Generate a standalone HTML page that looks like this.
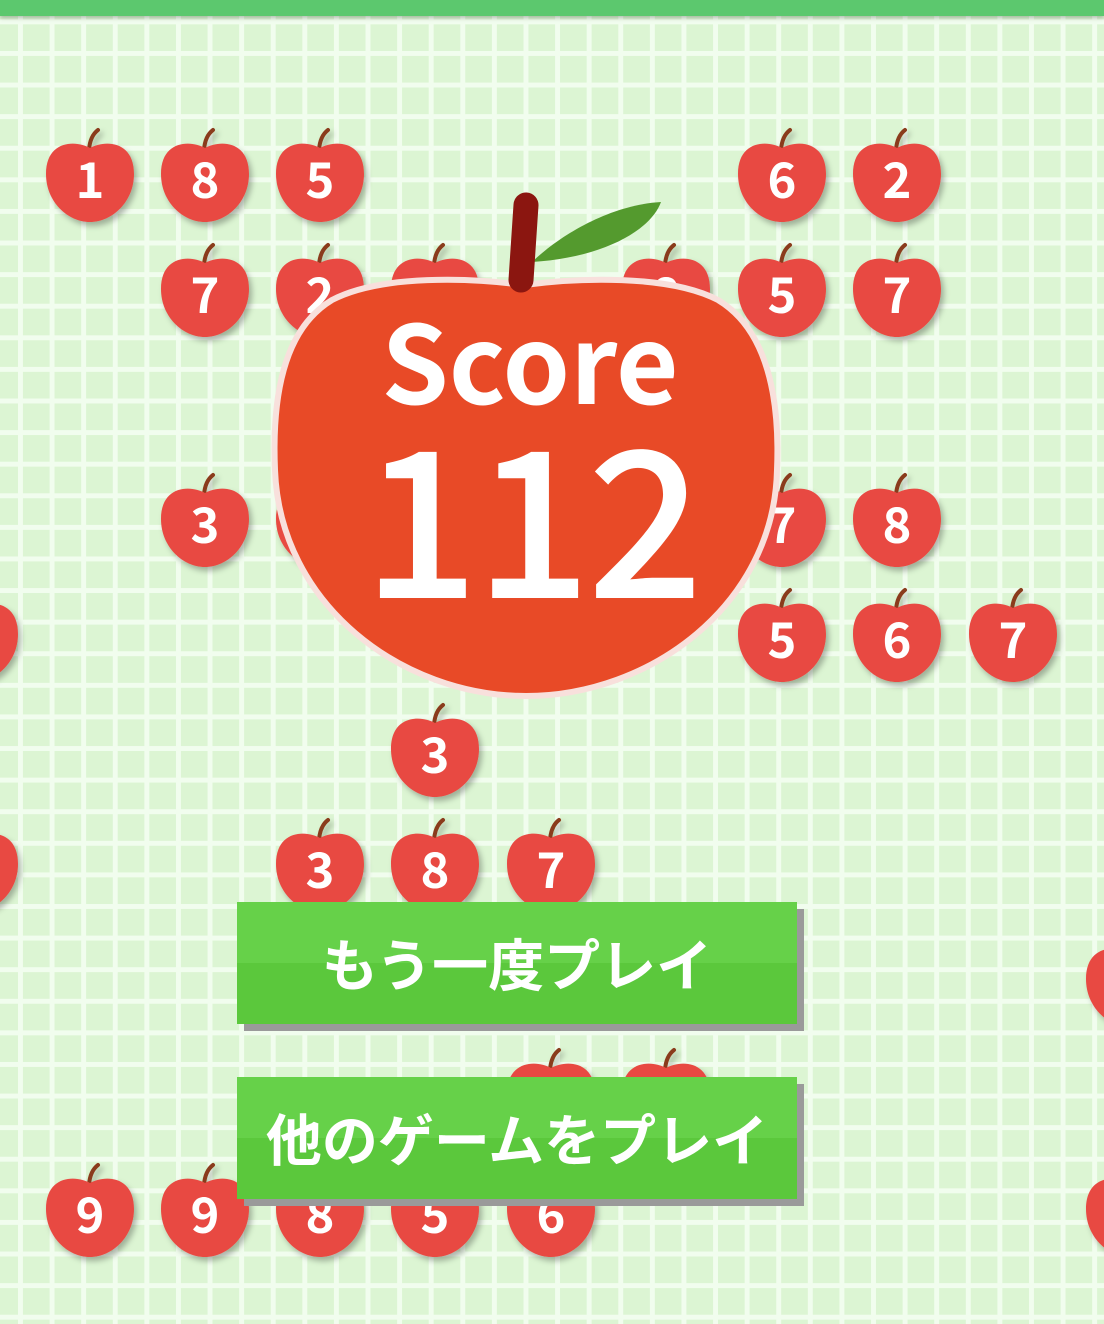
<!DOCTYPE html>
<html><head><meta charset="utf-8">
<style>
html,body{margin:0;padding:0;}
body{width:1104px;height:1324px;overflow:hidden;position:relative;
background-color:#dcf5d3;
background-image:linear-gradient(to right,#f1fdee 0,#f1fdee 5px,transparent 5px),linear-gradient(to bottom,#f1fdee 0,#f1fdee 5px,transparent 5px);
background-size:31.6px 31.6px;background-position:18px 19.4px;
font-family:"Noto Sans CJK JP","Liberation Sans",sans-serif;}
.bar{position:absolute;left:0;top:0;width:1104px;height:16px;background:#5cc86e;box-shadow:0 2px 4px rgba(0,0,0,.25);}
svg{position:absolute;left:0;top:0;}
.btn{position:absolute;left:237px;width:560px;height:122px;background:linear-gradient(#66d149 0,#66d149 50%,#5bc83c 50%,#5bc83c 100%);box-shadow:7px 7px 0 #9a9a9a;color:#fff;font-weight:700;font-size:56px;text-align:center;line-height:122px;}
</style></head><body>
<div class="bar"></div>
<svg width="1104" height="1324" viewBox="0 0 1104 1324">
<defs>
<filter id="sh" x="-20%" y="-20%" width="150%" height="150%"><feDropShadow dx="3" dy="4" stdDeviation="3" flood-color="#000" flood-opacity="0.28"/></filter>
<g id="ap">
<path d="M-1,-30 Q0,-44 8,-50" stroke="#8a3a1a" stroke-width="4" fill="none" stroke-linecap="round"/>
<path d="M0,-32 C-14,-40 -44,-40 -44,-6 C-44,22 -22,42 0,42 C22,42 44,22 44,-6 C44,-40 14,-40 0,-32Z" fill="#e84a42"/>
</g>
</defs>
<g filter="url(#sh)" font-family="Noto Sans CJK JP, Liberation Sans, sans-serif" font-weight="700" font-size="49" fill="#fff" text-anchor="middle">
<use href="#ap" x="90" y="180"/><text x="90" y="198">1</text>
<use href="#ap" x="205" y="180"/><text x="205" y="198">8</text>
<use href="#ap" x="320" y="180"/><text x="320" y="198">5</text>
<use href="#ap" x="782" y="180"/><text x="782" y="198">6</text>
<use href="#ap" x="897" y="180"/><text x="897" y="198">2</text>
<use href="#ap" x="205" y="295"/><text x="205" y="313">7</text>
<use href="#ap" x="320" y="295"/><text x="320" y="313">2</text>
<use href="#ap" x="435" y="295"/><text x="435" y="313">7</text>
<use href="#ap" x="666" y="295"/><text x="666" y="313">8</text>
<use href="#ap" x="782" y="295"/><text x="782" y="313">5</text>
<use href="#ap" x="897" y="295"/><text x="897" y="313">7</text>
<use href="#ap" x="205" y="525"/><text x="205" y="543">3</text>
<use href="#ap" x="320" y="525"/><text x="320" y="543">2</text>
<use href="#ap" x="782" y="525"/><text x="782" y="543">7</text>
<use href="#ap" x="897" y="525"/><text x="897" y="543">8</text>
<use href="#ap" x="-26" y="640"/>
<use href="#ap" x="782" y="640"/><text x="782" y="658">5</text>
<use href="#ap" x="897" y="640"/><text x="897" y="658">6</text>
<use href="#ap" x="1013" y="640"/><text x="1013" y="658">7</text>
<use href="#ap" x="435" y="755"/><text x="435" y="773">3</text>
<use href="#ap" x="-26" y="870"/>
<use href="#ap" x="320" y="870"/><text x="320" y="888">3</text>
<use href="#ap" x="435" y="870"/><text x="435" y="888">8</text>
<use href="#ap" x="551" y="870"/><text x="551" y="888">7</text>
<use href="#ap" x="1130" y="985"/>
<use href="#ap" x="551" y="1100"/>
<use href="#ap" x="666" y="1100"/>
<use href="#ap" x="90" y="1215"/><text x="90" y="1233">9</text>
<use href="#ap" x="205" y="1215"/><text x="205" y="1233">9</text>
<use href="#ap" x="320" y="1215"/><text x="320" y="1233">8</text>
<use href="#ap" x="435" y="1215"/><text x="435" y="1233">5</text>
<use href="#ap" x="551" y="1215"/><text x="551" y="1233">6</text>
<use href="#ap" x="1130" y="1215"/>
</g>
<path d="M532,262 C560,235 610,205 661,202 C650,232 600,258 532,262Z" fill="#549a2e"/>
<path d="M524,285 C472,278 382,274 332,300 C282,330 272,400 275,470 C280,605 402,696 526,696 C650,696 774,605 777,470 C780,400 768,330 718,300 C668,274 576,278 524,285Z" fill="#e84a27" stroke="#f8e0dc" stroke-width="6"/>
<line x1="526" y1="205" x2="521" y2="280" stroke="#8b1610" stroke-width="25" stroke-linecap="round"/>
<text x="530" y="404" font-family="Noto Sans CJK JP, Liberation Sans, sans-serif" font-weight="700" font-size="108" fill="#fff" text-anchor="middle">Score</text>
<text x="531" y="598" font-family="Noto Sans CJK JP, Liberation Sans, sans-serif" font-weight="500" font-size="204" fill="#fff" text-anchor="middle" letter-spacing="-4">112</text>
</svg>
<div class="btn" style="top:902px;">もう一度プレイ</div>
<div class="btn" style="top:1077px;">他のゲームをプレイ</div>
</body></html>
